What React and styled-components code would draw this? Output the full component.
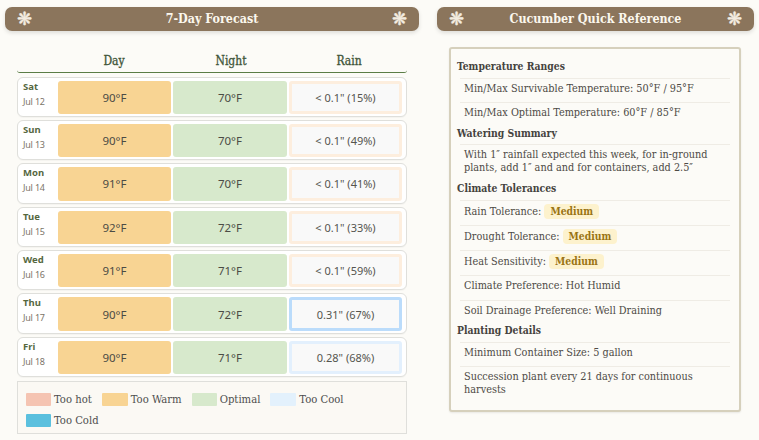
import React from "react";
import styled, { createGlobalStyle } from "styled-components";

const Global = createGlobalStyle`
  html, body { margin: 0; padding: 0; background: #fcfbf7; }
  body { font-family: "DejaVu Serif Condensed", "DejaVu Serif", serif; color: #444; }
  * { box-sizing: border-box; }
`;
const Page = styled.div`
  width: 759px; height: 440px; overflow: hidden;
  display: grid; grid-template-columns: 414px 317px; column-gap: 18px;
  padding: 7px 5px 0;
`;
const Column = styled.section`display: flex; flex-direction: column;`;
const Banner = styled.h2`
  margin: 0; height: 24px; border-radius: 7px; background: #8b755c;
  box-shadow: 0 2px 4px rgba(0,0,0,.12);
  display: flex; align-items: center; justify-content: space-between;
  padding: 0 12px; color: #fcf8ee; font-size: 12.4px; font-weight: 700; line-height: 1;
`;
const Flower = styled.span`
  font-family: "DejaVu Sans", sans-serif; font-size: 18px; font-weight: 400; color: #f3ece0; line-height: 1;
  -webkit-text-stroke: .4px #f3ece0;
`;
const Forecast = styled.div`padding: 13px 12px 0; display: flex; flex-direction: column;`;
const HeadRow = styled.div`
  height: 29px; display: grid; grid-template-columns: 40px 114px 120px 116px;
  border-bottom: 1.5px solid #5b7d46; border-radius: 0 0 3px 3px; align-items: end; padding-bottom: 3px;
  color: #42563a; font-size: 12px; line-height: 15px; text-align: center; margin-bottom: 3.5px; -webkit-text-stroke: .3px;
`;
const HeadCell = styled.div``;
const Row = styled.div`
  height: 40.4px; margin-bottom: 3px; background: #fff;
  border: 1px solid #dfdfdb; border-radius: 6px; padding: 3px 4px 2px 4px;
  display: grid; grid-template-columns: 34px 113px 114px 113px; column-gap: 2px; align-items: stretch;
  box-shadow: 0 1px 1px rgba(0,0,0,.03);
`;
const DateCell = styled.div`
  font-family: "Noto Sans", sans-serif; display: flex; flex-direction: column; gap: 3px; padding: 0 0 0 1px;
`;
const Dow = styled.div`font-size: 9.5px; font-weight: 700; color: #56683f; line-height: 12px;`;
const Dt = styled.div`font-size: 9px; letter-spacing: -.2px; color: #7b7468; line-height: 12px;`;
const Temp = styled.div`
  background: ${p => p.$bg}; border-radius: 3px; display: flex; align-items: center; justify-content: center;
  font-family: "Noto Sans", sans-serif; font-size: 11.5px; color: #4b4b45;
`;
const Rain = styled(Temp)`background: #f9f9f9; border: 3px solid ${p => p.$edge}; font-size: 11px; color: #55554f;`;
const Legend = styled.div`
  margin-top: 0.5px; height: 53px; border: 1px solid #dfdfdb; background: #fbf9f4;
  padding: 11px 8px 0; display: flex; flex-wrap: wrap; align-content: flex-start; column-gap: 10px; row-gap: 8px;
`;
const LegendItem = styled.div`display: flex; align-items: center; gap: 3px; font-size: 11.2px; color: #4f4f4f; height: 13px;`;
const Swatch = styled.span`width: ${p => p.$w}px; height: 13px; background: ${p => p.$c}; border-radius: 1px; display: block;`;
const Card = styled.div`
  margin: 16px 13px 0 12px; height: 364.5px; border: 2px solid #d6d0bc; border-radius: 3px; background: #fcfbf7;
  padding: 9px 9px 0 6px; box-shadow: 0 1px 2px rgba(0,0,0,.08);
`;
const SectionTitle = styled.h3`margin: 0; font-size: 10.3px; font-weight: 700; color: #45433e; line-height: 14px; height: 19.5px; padding-top: 1px;`;
const Item = styled.div`
  margin-left: 3px; border-top: 1px solid #efece5; padding: 3px 0 0 4px;
  font-size: 10.8px; line-height: 13px; color: #4d4a45; height: ${p => p.$h}px;
`;
const Pill = styled.span`
  display: inline-block; padding: 1px 6px; background: #fdf2cd; border-radius: 4px;
  color: #9a7414; font-size: 10.3px; font-weight: 700; line-height: 13px;
`;

const days = [
  ["Sat","Jul 12","90°F","70°F","< 0.1\" (15%)","#fdeede"],
  ["Sun","Jul 13","90°F","70°F","< 0.1\" (49%)","#fdeede"],
  ["Mon","Jul 14","91°F","70°F","< 0.1\" (41%)","#fdeede"],
  ["Tue","Jul 15","92°F","72°F","< 0.1\" (33%)","#fdeede"],
  ["Wed","Jul 16","91°F","71°F","< 0.1\" (59%)","#fdeede"],
  ["Thu","Jul 17","90°F","72°F","0.31\" (67%)","#bbdcfb"],
  ["Fri","Jul 18","90°F","71°F","0.28\" (68%)","#e3f0fd"],
];
const legend = [["Too hot","#f5c4b2",25],["Too Warm","#f8d493",26],["Optimal","#d7e9cc",25],["Too Cool","#e3f1fc",26],["Too Cold","#5bc0de",25]];

export default function App() {
  return (
    <Page>
      <Global />
      <Column>
        <Banner><Flower>❋</Flower>7-Day Forecast<Flower>❋</Flower></Banner>
        <Forecast>
          <HeadRow><HeadCell /><HeadCell>Day</HeadCell><HeadCell>Night</HeadCell><HeadCell>Rain</HeadCell></HeadRow>
          {days.map(d => (
            <Row key={d[0]}>
              <DateCell><Dow>{d[0]}</Dow><Dt>{d[1]}</Dt></DateCell>
              <Temp $bg="#f8d493">{d[2]}</Temp>
              <Temp $bg="#d7e9cc">{d[3]}</Temp>
              <Rain $edge={d[5]}>{d[4]}</Rain>
            </Row>
          ))}
          <Legend>
            {legend.map(l => <LegendItem key={l[0]}><Swatch $c={l[1]} $w={l[2]} />{l[0]}</LegendItem>)}
          </Legend>
        </Forecast>
      </Column>
      <Column>
        <Banner><Flower>❋</Flower>Cucumber Quick Reference<Flower>❋</Flower></Banner>
        <Card>
          <SectionTitle>Temperature Ranges</SectionTitle>
          <Item $h={24}>Min/Max Survivable Temperature: 50°F / 95°F</Item>
          <Item $h={23}>Min/Max Optimal Temperature: 60°F / 85°F</Item>
          <SectionTitle>Watering Summary</SectionTitle>
          <Item $h={36}>With 1″ rainfall expected this week, for in-ground plants, add 1″ and and for containers, add 2.5″</Item>
          <SectionTitle>Climate Tolerances</SectionTitle>
          <Item $h={25}>Rain Tolerance: <Pill>Medium</Pill></Item>
          <Item $h={25}>Drought Tolerance: <Pill>Medium</Pill></Item>
          <Item $h={25}>Heat Sensitivity: <Pill>Medium</Pill></Item>
          <Item $h={25}>Climate Preference: Hot Humid</Item>
          <Item $h={22.5}>Soil Drainage Preference: Well Draining</Item>
          <SectionTitle>Planting Details</SectionTitle>
          <Item $h={24.5}>Minimum Container Size: 5 gallon</Item>
          <Item $h={36}>Succession plant every 21 days for continuous harvests</Item>
        </Card>
      </Column>
    </Page>
  );
}
